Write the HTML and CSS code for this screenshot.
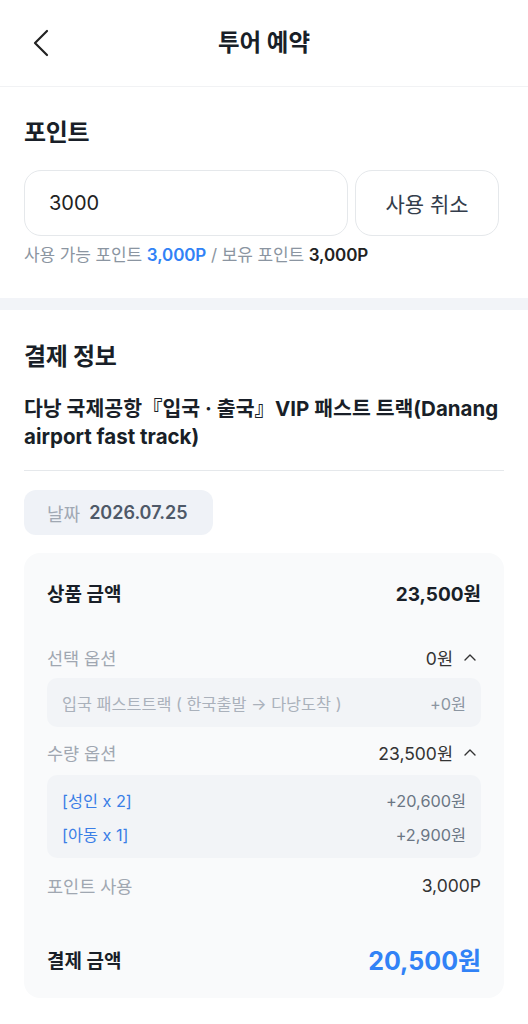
FILE: index.html
```html
<!DOCTYPE html>
<html lang="ko">
<head>
<meta charset="utf-8">
<title>투어 예약</title>
<link rel="stylesheet" href="styles.css">
</head>
<body>
<header class="topbar">
  <button class="back" aria-label="뒤로">
    <svg width="16" height="28" viewBox="0 0 16 28"><path d="M14 2 L2 14 L14 26" fill="none" stroke="#222" stroke-width="2.2" stroke-linecap="round" stroke-linejoin="round"/></svg>
  </button>
  <h1 class="title">투어 예약</h1>
</header>

<section class="points">
  <h2 class="sec-title">포인트</h2>
  <div class="point-form">
    <div class="point-input">3000</div>
    <button class="cancel-btn">사용 취소</button>
  </div>
  <p class="point-help">사용 가능 포인트 <b class="blue">3,000P</b> / 보유 포인트 <b class="dark">3,000P</b></p>
</section>

<div class="band"></div>

<section class="payment">
  <h2 class="sec-title">결제 정보</h2>
  <p class="product">다낭 국제공항『입국 · 출국』VIP 패스트 트랙(Danang airport fast track)</p>
  <hr class="divider">
  <div class="date-chip"><span class="date-label">날짜</span><span class="date-value">2026.07.25</span></div>

  <div class="summary">
    <div class="row row-main">
      <span class="lbl-strong">상품 금액</span>
      <span class="val-strong">23,500원</span>
    </div>

    <div class="row row-opt row-opt1">
      <span class="lbl-gray">선택 옵션</span>
      <span class="val-opt">0원 <svg class="caret" width="12" height="8" viewBox="0 0 12 8"><path d="M1 7 L6 2 L11 7" fill="none" stroke="#333" stroke-width="1.4" stroke-linecap="round" stroke-linejoin="round"/></svg></span>
    </div>
    <div class="subbox subbox1">
      <div class="subrow"><span class="sub-gray">입국 패스트트랙 ( 한국출발 → 다낭도착 )</span><span class="sub-val-light">+0원</span></div>
    </div>

    <div class="row row-opt row-opt2">
      <span class="lbl-gray">수량 옵션</span>
      <span class="val-opt">23,500원 <svg class="caret" width="12" height="8" viewBox="0 0 12 8"><path d="M1 7 L6 2 L11 7" fill="none" stroke="#333" stroke-width="1.4" stroke-linecap="round" stroke-linejoin="round"/></svg></span>
    </div>
    <div class="subbox subbox2">
      <div class="subrow"><span class="sub-blue">[성인 x 2]</span><span class="sub-val">+20,600원</span></div>
      <div class="subrow"><span class="sub-blue">[아동 x 1]</span><span class="sub-val">+2,900원</span></div>
    </div>

    <div class="row row-opt row-point">
      <span class="lbl-gray">포인트 사용</span>
      <span class="val-opt">3,000P</span>
    </div>

    <div class="row row-total">
      <span class="lbl-strong">결제 금액</span>
      <span class="val-total">20,500원</span>
    </div>
  </div>
</section>
</body>
</html>
```

FILE: styles.css
```css
* { box-sizing: border-box; }
html, body { margin: 0; padding: 0; background: #fff; }
body {
  width: 528px;
  font-family: "Inter", "Noto Sans CJK KR", sans-serif;
  color: #191f28;
}
h1, h2, p { margin: 0; }
button { font-family: inherit; }

.topbar {
  position: relative;
  height: 87px;
  border-bottom: 1px solid #f1f2f4;
  display: flex;
  align-items: center;
  justify-content: center;
}
.back {
  position: absolute;
  left: 33px;
  top: 29px;
  padding: 0;
  border: 0;
  background: none;
  width: 16px;
  height: 28px;
  display: flex;
}
.title {
  font-size: 23.5px;
  font-weight: 700;
  line-height: 30px;
  color: #191f28;
}

.points { padding: 31px 24px 32px; }
.sec-title {
  font-size: 24px;
  font-weight: 700;
  line-height: 30px;
  color: #191f28;
  letter-spacing: -0.3px;
}
.point-form {
  display: flex;
  gap: 7px;
  margin-top: 22px;
}
.point-input {
  width: 324px;
  height: 66px;
  border: 1px solid #e5e8eb;
  border-radius: 17px;
  padding-left: 24px;
  display: flex;
  align-items: center;
  font-size: 20px;
  color: #222;
}
.cancel-btn {
  width: 144px;
  height: 66px;
  border: 1px solid #e5e8eb;
  border-radius: 17px;
  background: #fff;
  font-size: 21px;
  color: #333d4b;
}
.point-help {
  margin-top: 8px;
  font-size: 17px;
  line-height: 22px;
  color: #8b95a1;
  letter-spacing: -0.1px;
}
.point-help b { font-weight: 600; }
.blue { color: #3182f6; }
.dark { color: #222; }

.band { height: 12px; background: #f2f4f8; }

.payment { padding: 32px 24px 26px; }
.product {
  margin-top: 23px;
  font-size: 20.5px;
  font-weight: 700;
  line-height: 28px;
  color: #191f28;
}
.divider {
  margin: 19px 0 0;
  border: 0;
  height: 1px;
  background: #e5e8eb;
}
.date-chip {
  margin-top: 19px;
  display: inline-flex;
  align-items: center;
  gap: 9px;
  height: 45px;
  padding: 0 25px 0 23px;
  background: #eff2f7;
  border-radius: 12px;
  font-size: 18px;
}
.date-label { color: #a0a8b3; }
.date-value { color: #4e5968; font-weight: 600; }

.summary {
  margin-top: 18px;
  background: #f9fafb;
  border-radius: 16px;
  padding: 14px 23px 14px;
}
.row {
  display: flex;
  align-items: center;
  justify-content: space-between;
}
.row-main { height: 50px; }
.row-opt { height: 42px; }
.row-opt1 { margin-top: 19px; }
.row-opt2 { margin-top: 4px; }
.row-point { margin-top: 6px; }
.row-total { height: 50px; margin-top: 28px; }

.lbl-strong { font-size: 19px; font-weight: 700; color: #191f28; }
.val-strong { font-size: 19px; font-weight: 700; color: #191f28; }
.lbl-gray { font-size: 17.5px; color: #a0a7b1; }
.val-opt {
  font-size: 17.5px;
  color: #333;
  display: inline-flex;
  align-items: center;
  gap: 11px;
}
.caret { margin-right: 5px; }
.val-total { font-size: 25px; font-weight: 700; color: #3182f6; }

.subbox {
  background: #f2f4f7;
  border-radius: 10px;
  padding: 0 15px;
}
.subbox1 { height: 49px; display: flex; align-items: center; }
.subbox1 .subrow { flex: 1; }
.subbox2 { margin-top: 2px; padding: 8px 15px 7px; }
.subrow {
  height: 34px;
  display: flex;
  align-items: center;
  justify-content: space-between;
  font-size: 16.3px;
}
.sub-gray { color: #aab1bb; }
.sub-val-light { color: #8b95a1; }
.sub-blue { color: #3a7ee6; }
.sub-val { color: #6b7684; }
```
